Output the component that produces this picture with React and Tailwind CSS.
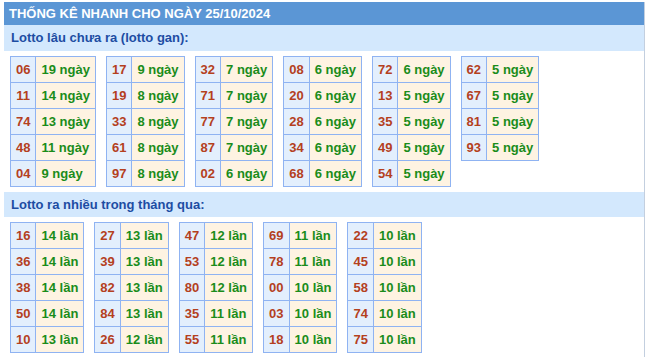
import React from "react";

const gan = [
  [["06", 19], ["11", 14], ["74", 13], ["48", 11], ["04", 9]],
  [["17", 9], ["19", 8], ["33", 8], ["61", 8], ["97", 8]],
  [["32", 7], ["71", 7], ["77", 7], ["87", 7], ["02", 6]],
  [["08", 6], ["20", 6], ["28", 6], ["34", 6], ["68", 6]],
  [["72", 6], ["13", 5], ["35", 5], ["49", 5], ["54", 5]],
  [["62", 5], ["67", 5], ["81", 5], ["93", 5]],
];

const nhieu = [
  [["16", 14], ["36", 14], ["38", 14], ["50", 14], ["10", 13]],
  [["27", 13], ["39", 13], ["82", 13], ["84", 13], ["26", 12]],
  [["47", 12], ["53", 12], ["80", 12], ["35", 11], ["55", 11]],
  [["69", 11], ["78", 11], ["00", 10], ["03", 10], ["18", 10]],
  [["22", 10], ["45", 10], ["58", 10], ["74", 10], ["75", 10]],
];

function Block({ rows, unit }) {
  return (
    <table className="border-collapse">
      <tbody>
        {rows.map(([n, c], i) => (
          <tr key={i}>
            <td className="border border-[#8fb3f2] bg-[#e3effd] px-[5px] py-[5px] text-center leading-[15px] text-[#b4401e]">
              {n}
            </td>
            <td className="border border-[#8fb3f2] bg-[#fef3e2] px-[5px] py-[5px] text-left leading-[15px] text-[#1a8c1a] whitespace-nowrap">
              {c} {unit}
            </td>
          </tr>
        ))}
      </tbody>
    </table>
  );
}

export default function App() {
  return (
    <div
      className="bg-white min-h-[357px] pt-[2px] pl-[4px]"
      style={{ fontFamily: '"Liberation Sans", Arial, sans-serif' }}
    >
      <div className="w-[641px] min-h-[355px] border-r border-[#c3cfdf] text-[13px] font-bold">
        <div className="h-[23px] bg-[#5b96d5] pl-[5px] text-white leading-[23px]">
          THỐNG KÊ NHANH CHO NGÀY 25/10/2024
        </div>
        <div className="h-[26px] bg-[#d3e8fd] pl-[7px] text-[#1d4da3] leading-[26px]">
          Lotto lâu chưa ra (lotto gan):
        </div>
        <div className="flex items-start gap-[10px] pl-[6px] pt-[5px] pb-[5px]">
          {gan.map((t, i) => (
            <Block key={i} rows={t} unit="ngày" />
          ))}
        </div>
        <div className="h-[25px] bg-[#d3e8fd] pl-[7px] text-[#1d4da3] leading-[25px]">
          Lotto ra nhiều trong tháng qua:
        </div>
        <div className="flex items-start gap-[10px] pl-[6px] pt-[5px] pb-[5px]">
          {nhieu.map((t, i) => (
            <Block key={i} rows={t} unit="lần" />
          ))}
        </div>
      </div>
    </div>
  );
}
